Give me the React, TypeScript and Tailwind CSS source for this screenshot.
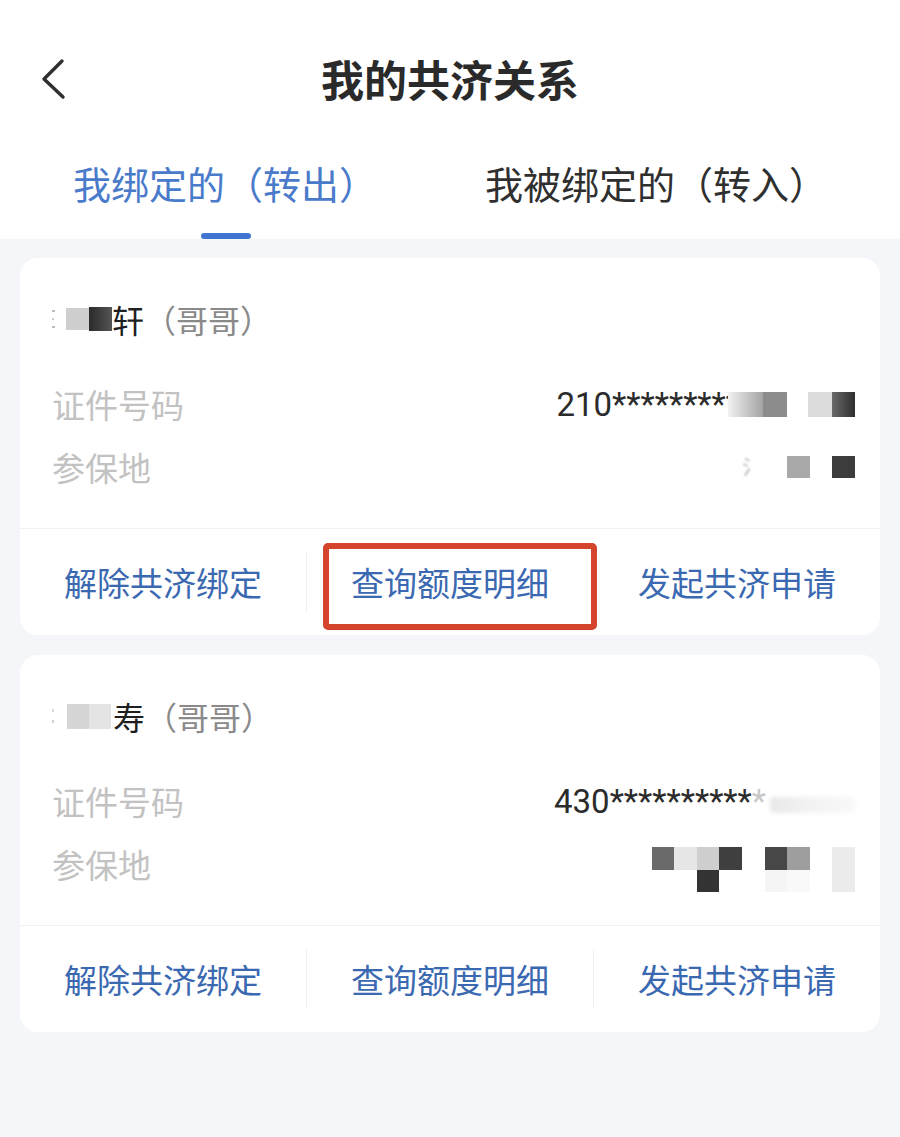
import React from "react";

const FONT = { fontFamily: '"Noto Sans CJK SC", "Noto Sans", sans-serif' };
const NUM = { fontFamily: 'Roboto, "Noto Sans CJK SC", sans-serif' };

function Block({ w, h, c, className = "" }: { w: string; h: string; c: string; className?: string }) {
  return <span className={`block ${w} ${h} ${c} ${className}`} />;
}

function Actions({ highlight }: { highlight?: boolean }) {
  return (
    <div className="relative flex h-[107px] items-center border-t border-[#f0f1f3]">
      <div className="flex flex-1 items-center justify-center text-[33px] leading-none text-[#3b69b1]">解除共济绑定</div>
      <div className="h-[60px] w-px bg-[#eeeff1]" />
      <div className="flex flex-1 items-center justify-center text-[33px] leading-none text-[#3b69b1]">查询额度明细</div>
      <div className="h-[60px] w-px bg-[#eeeff1]" />
      <div className="flex flex-1 items-center justify-center text-[33px] leading-none text-[#3b69b1]">发起共济申请</div>
      {highlight && (
        <div className="pointer-events-none absolute left-[303px] top-[14px] h-[87px] w-[274px] rounded-[5px] border-[6px] border-[#d4442d]" />
      )}
    </div>
  );
}

function Card1() {
  return (
    <div className="overflow-hidden rounded-[18px] bg-white">
      <div className="pb-[40px] pl-[32px] pr-[25px] pt-[40px]">
        <div className="flex h-[42px] items-center text-[32px] leading-none">
          <span className="flex w-[6px] flex-col items-start gap-[6px]">
            <span className="block h-[2px] w-[3px] bg-[#bbbbbb]" />
            <span className="block h-[2px] w-[2px] bg-[#cccccc]" />
            <span className="block h-[2px] w-[3px] bg-[#bbbbbb]" />
          </span>
          <span className="w-[8px]" />
          <Block w="w-[23px]" h="h-[22px]" c="bg-[#cfcfcf]" />
          <Block w="w-[23px]" h="h-[24px]" c="bg-gradient-to-r from-[#2b2b2b] to-[#555555]" />
          <span className="text-[#1f1f1f]">轩</span>
          <span className="text-[#8a8a8a]">（哥哥）</span>
        </div>
        <div className="mt-[43px] flex h-[42px] items-center justify-between">
          <span className="text-[33px] leading-none text-[#c2c2c2]">证件号码</span>
          <span className="flex items-center">
            <span className="text-[33px] leading-none text-[#2b2b2b]" style={NUM}>210*********</span>
            <span className="flex h-[25px] items-stretch">
              <Block w="w-[35px]" h="h-full" c="bg-gradient-to-r from-[#f2f2f2] to-[#a3a3a3]" className="-ml-[12px]" />
              <Block w="w-[24px]" h="h-full" c="bg-[#8c8c8c]" />
              <Block w="w-[21px]" h="h-full" c="bg-white" />
              <Block w="w-[24px]" h="h-full" c="bg-[#dcdcdc]" />
              <Block w="w-[23px]" h="h-full" c="bg-gradient-to-r from-[#6a6a6a] to-[#2f2f2f]" />
            </span>
          </span>
        </div>
        <div className="mt-[21px] flex h-[42px] items-center justify-between">
          <span className="text-[33px] leading-none text-[#c2c2c2]">参保地</span>
          <span className="flex h-[22px] items-center">
            <span className="mr-[25px] text-[20px] leading-none text-[#b0b0b0] blur-[1px]">氵</span>
            <Block w="w-[23px]" h="h-[22px]" c="bg-[#a9a9a9]" />
            <span className="w-[22px]" />
            <Block w="w-[23px]" h="h-[22px]" c="bg-[#3c3c3c]" />
          </span>
        </div>
      </div>
      <Actions highlight />
    </div>
  );
}

const mosaic: string[] = [
  "bg-[#6a6a6a]", "bg-[#e6e6e6]", "bg-[#cfcfcf]", "bg-[#3f3f3f]", "bg-transparent", "bg-[#474747]", "bg-[#9e9e9e]", "bg-transparent", "bg-[#ececec]",
  "bg-transparent", "bg-transparent", "bg-[#333333]", "bg-transparent", "bg-transparent", "bg-[#f5f5f5]", "bg-[#f9f9f9]", "bg-transparent", "bg-[#ececec]",
];

function Card2() {
  return (
    <div className="overflow-hidden rounded-[18px] bg-white">
      <div className="pb-[40px] pl-[32px] pr-[25px] pt-[40px]">
        <div className="flex h-[42px] items-center text-[32px] leading-none">
          <span className="flex w-[6px] flex-col items-start gap-[8px]">
            <span className="block h-[3px] w-[2px] bg-[#d8d8d8]" />
            <span className="block h-[3px] w-[2px] bg-[#d0d0d0]" />
          </span>
          <span className="w-[9px]" />
          <Block w="w-[22px]" h="h-[25px]" c="bg-[#d6d6d6]" />
          <Block w="w-[22px]" h="h-[25px]" c="bg-[#e4e4e4]" />
          <span className="w-[2px]" />
          <span className="text-[#1f1f1f]">寿</span>
          <span className="text-[#8a8a8a]">（哥哥）</span>
        </div>
        <div className="mt-[43px] flex h-[42px] items-center justify-between">
          <span className="text-[33px] leading-none text-[#c2c2c2]">证件号码</span>
          <span className="flex items-center">
            <span className="text-[33px] leading-none text-[#2b2b2b]" style={NUM}>430**********<span className="text-[#c8c8c8]">*</span></span>
            <Block w="w-[85px]" h="h-[16px]" c="bg-gradient-to-r from-[#e8e8e8] via-[#f3f3f3] to-[#f8f8f8]" className="ml-[4px] mt-[8px] rounded-[4px] blur-[2px]" />
          </span>
        </div>
        <div className="mt-[21px] flex h-[42px] items-start justify-between">
          <span className="flex h-[42px] items-center text-[33px] leading-none text-[#c2c2c2]">参保地</span>
          <span className="mt-[4px] grid grid-cols-[repeat(9,22.6px)] grid-rows-[22.5px_22.5px]">
            {mosaic.map((c, i) => (
              <span key={i} className={`block ${c}`} />
            ))}
          </span>
        </div>
      </div>
      <Actions />
    </div>
  );
}

export default function App() {
  return (
    <div className="min-h-[1137px] w-full bg-[#f4f6f9]" style={FONT}>
      <div className="bg-white">
        <div className="grid h-[156px] grid-cols-[1fr_auto_1fr] items-center">
          <div className="pl-[40px]">
            <svg width="26" height="42" viewBox="0 0 26 42" className="mt-[2px]">
              <polyline points="22,3 4,21 23,39" fill="none" stroke="#2f2f2f" strokeWidth="3.4" strokeLinecap="round" strokeLinejoin="round" />
            </svg>
          </div>
          <div className="text-[43px] font-bold leading-none text-[#2a2a2a]">我的共济关系</div>
          <div />
        </div>
        <div className="mt-[2px] flex">
          <div className="ml-[73px] flex flex-col">
            <span className="h-[50px] text-[38px] leading-[50px] text-[#4a7bcb]">我绑定的（转出）</span>
            <span className="ml-[128px] mt-[25px] block h-[6px] w-[50px] rounded-full bg-[#3f74cf]" />
          </div>
          <div className="ml-[108px] flex flex-col">
            <span className="h-[50px] text-[38px] leading-[50px] text-[#2f2f2f]">我被绑定的（转入）</span>
          </div>
        </div>
      </div>
      <div className="flex flex-col gap-[20px] px-[20px] pt-[19px]">
        <Card1 />
        <Card2 />
      </div>
    </div>
  );
}
